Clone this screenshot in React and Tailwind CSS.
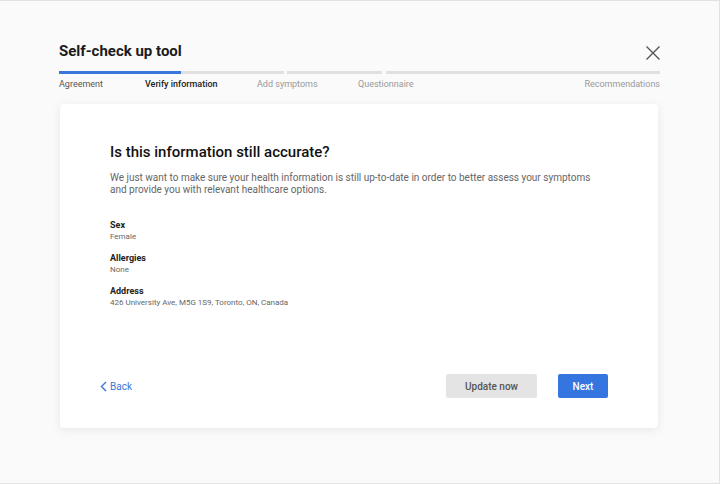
const steps = [
  { label: 'Agreement', w: 'w-[86px]', cls: 'text-[#555]' },
  { label: 'Verify information', w: 'w-[112px]', cls: 'font-medium text-[#222]' },
  { label: 'Add symptoms', w: 'w-[101px]', cls: 'text-[#999]' },
  { label: 'Questionnaire', w: 'flex-1', cls: 'text-[#999]' },
]

function Field({ label, value }) {
  return (
    <div className="mb-[10px]">
      <div className="text-[9px] font-bold leading-[12px] text-[#222]">{label}</div>
      <div className="text-[8px] leading-[11px] text-[#666]">{value}</div>
    </div>
  )
}

export default function App() {
  return (
    <div
      className="h-[484px] w-[720px] overflow-hidden border-y border-r border-[#e2e2e2] bg-[#fafafa]"
      style={{ fontFamily: 'Roboto, "Liberation Sans", sans-serif' }}
    >
      <div className="px-[59px] pt-[40px]">
        <div className="flex h-[20px] items-center justify-between">
          <h1 className="text-[15px] font-bold text-[#1a1a1a]">Self-check up tool</h1>
          <svg width="16" height="16" viewBox="0 0 16 16" className="mr-[-1px] mt-[4px]">
            <path d="M1.5 1.5 L14.5 14.5 M14.5 1.5 L1.5 14.5" stroke="#555" strokeWidth="1.4" />
          </svg>
        </div>

        <div className="mt-[10px] flex h-[3px] gap-[3px]">
          <div className="flex w-[225px] bg-[#e0e0e0]">
            <div className="w-[122px] bg-[#3a75dc]" />
          </div>
          <div className="w-[95px] bg-[#e0e0e0]" />
          <div className="ml-[1px] flex-1 bg-[#e0e0e0]" />
        </div>

        <div className="mt-[4px] flex text-[9px] leading-[12px]">
          {steps.map((s) => (
            <div key={s.label} className={`${s.w} ${s.cls}`}>
              {s.label}
            </div>
          ))}
          <div className="text-[#999]">Recommendations</div>
        </div>

        <div className="mt-[14px] ml-[1px] mr-[2px] h-[324px] rounded-[4px] bg-white px-[50px] pt-[39px] shadow-[0_2px_10px_rgba(0,0,0,0.08)]">
          <h2 className="text-[15px] font-medium leading-[18px] text-[#111]">
            Is this information still accurate?
          </h2>
          <p className="mt-[11px] w-[490px] text-[10px] leading-[12px] text-[#666]">
            We just want to make sure your health information is still up-to-date in order to better assess your symptoms
            and provide you with relevant healthcare options.
          </p>

          <div className="mt-[23px]">
            <Field label="Sex" value="Female" />
            <Field label="Allergies" value="None" />
            <Field label="Address" value="426 University Ave, M5G 1S9, Toronto, ON, Canada" />
          </div>

          <div className="ml-[-10px] mt-[66px] flex items-center">
            <button className="flex items-center gap-[3px] text-[10px] text-[#3a75dc]">
              <svg width="7" height="11" viewBox="0 0 7 11">
                <path d="M6 1 L1.5 5.5 L6 10" fill="none" stroke="#3a75dc" strokeWidth="1.4" />
              </svg>
              Back
            </button>
            <div className="flex-1" />
            <button className="h-[24px] w-[91px] rounded-[2px] bg-[#e4e4e4] text-[10px] font-medium text-[#555]">
              Update now
            </button>
            <button className="ml-[21px] h-[24px] w-[50px] rounded-[2px] bg-[#3575e0] text-[10px] font-medium text-white">
              Next
            </button>
          </div>
        </div>
      </div>
    </div>
  )
}
